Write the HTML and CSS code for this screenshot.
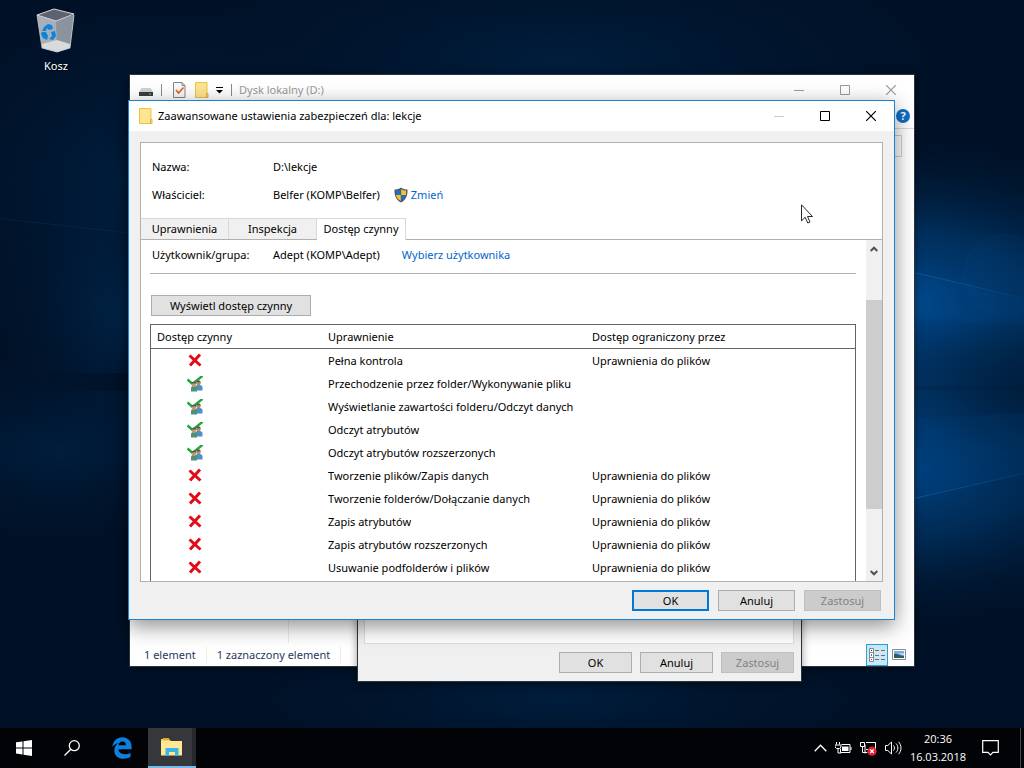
FILE: index.html
```
<!DOCTYPE html>
<html lang="pl">
	<head>
		<meta charset="UTF-8">
		<meta name="viewport" content="width=device-width, initial-scale=1.0">
		<title>Zaawansowane ustawienia zabezpieczeń dla: lekcje</title>
		<link rel="stylesheet" href="styles.css">
	</head>
	<body>
		<!-- shared icons -->
		<svg class="sprite" aria-hidden="true">
			<symbol id="folder" viewBox="0 0 14 16">
				<path d="M.5.5h11.500v15H.5z" fill="#ffe48f" stroke="#e9c34d"/>
				<path d="M11.500 11.500h1.500v4h-1.500z" fill="#ffe48f" stroke="#dfb52f"/>
			</symbol>
			<symbol id="deny" viewBox="0 0 16 16">
				<path d="M2.500 2.500l11 10M13 1.500L3 12.500" stroke="#e30b17" stroke-width="3" fill="none"/>
			</symbol>
			<symbol id="allow" viewBox="0 0 16 16">
				<path d="M.5 3.500L5.500 8 15.500-.2" stroke="#22a63c" stroke-width="2.400" fill="none"/>
				<path d="M8.500 14.500v-3c0-2 1.200-2.500 3.200-2.500s3.800.5 3.800 2.500v3z" fill="#4a91c8"/>
				<circle cx="11.500" cy="7.300" r="2.100" fill="#b08d66"/>
				<path d="M9.200 6.500c0-2.600 4.500-2.600 4.600 0-1.300-.8-3.100-.8-4.600 0z" fill="#5a5044"/>
				<path d="M4 15.500v-3c0-2 1.200-2.500 3-2.500s3 .5 3 2.500v3z" fill="#4d9276"/>
				<circle cx="6.900" cy="8.700" r="2.200" fill="#bd9d76"/>
				<path d="M4.600 7.800c0-2.600 4.500-2.600 4.600 0-1.300-.8-3.100-.8-4.600 0z" fill="#5a5044"/>
			</symbol>
			<symbol id="minimize" viewBox="0 0 10 10"><path d="M0 5.500h10" stroke="currentColor"/></symbol>
			<symbol id="maximize" viewBox="0 0 10 10"><path d="M.5.5h9v9h-9z" stroke="currentColor" fill="none"/></symbol>
			<symbol id="close" viewBox="0 0 10 10"><path d="M0 0l10 10M10 0L0 10" stroke="currentColor" stroke-width="1.200"/></symbol>
		</svg>

		<main class="desktop">
			<svg class="wallpaper" viewBox="0 0 1024 768" preserveAspectRatio="none" aria-hidden="true">
				<defs>
					<radialGradient id="glowRight">
						<stop offset="0" stop-color="#0060b8"/>
						<stop offset=".45" stop-color="#004482" stop-opacity=".75"/>
						<stop offset="1" stop-color="#001a38" stop-opacity="0"/>
					</radialGradient>
					<radialGradient id="glowLeft">
						<stop offset="0" stop-color="#00396d" stop-opacity=".9"/>
						<stop offset="1" stop-color="#001a38" stop-opacity="0"/>
					</radialGradient>
					<radialGradient id="shade">
						<stop offset="0" stop-color="#001a35" stop-opacity=".6"/>
						<stop offset="1" stop-color="#001a35" stop-opacity="0"/>
					</radialGradient>
					<linearGradient id="band">
						<stop offset="0" stop-color="#000a1c" stop-opacity="0"/>
						<stop offset="1" stop-color="#000a1c" stop-opacity=".5"/>
					</linearGradient>
					<linearGradient id="beam">
						<stop offset="0" stop-color="#1674c8" stop-opacity=".5"/>
						<stop offset="1" stop-color="#1674c8" stop-opacity=".15"/>
					</linearGradient>
				</defs>
				<rect width="1024" height="768" fill="#001127"/>
				<ellipse cx="140" cy="180" rx="230" ry="190" fill="url(#glowLeft)" opacity=".4"/>
				<ellipse cx="140" cy="315" rx="150" ry="150" fill="url(#glowLeft)" opacity=".6"/>
				<ellipse cx="60" cy="450" rx="240" ry="100" fill="url(#glowLeft)" opacity=".35"/>
				<ellipse cx="560" cy="60" rx="420" ry="130" fill="url(#glowLeft)" opacity=".35"/>
				<ellipse cx="890" cy="305" rx="330" ry="170" fill="url(#glowRight)" opacity=".75"/>
				<ellipse cx="890" cy="470" rx="310" ry="160" fill="url(#glowRight)" opacity=".65"/>
				<ellipse cx="560" cy="700" rx="330" ry="70" fill="url(#glowLeft)" opacity=".35"/>
				<ellipse cx="1024" cy="385" rx="120" ry="70" fill="url(#shade)"/>
				<path d="M0 218l135 15v1L0 219z" fill="#17578f" opacity=".2"/>
				<path d="M20 373h109v18H20z" fill="url(#band)"/>
				<path d="M914 386h110v4H914z" fill="#001a35" opacity=".2"/>
				<path d="M914 272l110 26v1l-110-26zM914 498l110-25v1l-110 25z" fill="url(#beam)"/>
				<path d="M914 274l110 26v25l-110-5zM914 499l110-26v-60l-110 5z" fill="#0062b4" opacity=".07"/>
				<circle cx="1004" cy="275" r="42" fill="#0a5ea6" opacity=".06"/>
			</svg>

			<a class="shortcut" href="#kosz">
				<svg width="40" height="46" viewBox="0 0 40 46" aria-hidden="true">
					<path d="M1 7l19 6 18-6-4 33-13 4-15-4z" fill="#a9afb8"/>
					<path d="M20 13l18-6-4 33-13 4z" fill="#8b939f"/>
					<path d="M6 36l15-4 13 4v4l-13 4-15-4z" fill="#d9dadc"/>
					<path d="M1 7l17-6 20 5-18 7z" fill="#5d636e" stroke="#d5d8dc"/>
					<path d="M1 7l5 33 15 4 13-4 4-33" fill="none" stroke="#c5c9cf" stroke-width=".8"/>
					<path d="M8 19l4-3 4 1 1 4-4 1-2-2-1 3-4 0zM15 24l4-1 1 5-3 4-4-1 3-3zM6 24l4 0 2 4-1 4-4-2-2-4z" fill="#0b84dc"/>
				</svg>
				<span>Kosz</span>
			</a>

			<section class="window explorer" aria-label="Dysk lokalny (D:)">
				<header class="quickbar">
					<svg class="drive" width="14" height="8" viewBox="0 0 14 8" aria-hidden="true">
						<path d="M2.500 0h9L14 4H0z" fill="#d0d2d4"/>
						<path d="M0 4h14v4H0z" fill="#3a3d40"/>
						<path d="M10 5.500h2v1h-2z" fill="#3be05a"/>
					</svg>
					<i class="sep"></i>
					<svg class="doc" width="13" height="16" viewBox="0 0 13 16" aria-hidden="true">
						<path d="M.5.5h8.500l3 3v12H.5z" fill="#f8f8f8" stroke="#858585"/>
						<path d="M9 .5v3h3" fill="none" stroke="#858585"/>
						<path d="M3 8l2.500 3L10.500 5.500" fill="none" stroke="#ea5b22" stroke-width="1.600"/>
					</svg>
					<svg class="folder" width="14" height="16"><use href="#folder"/></svg>
					<svg class="more" width="7" height="7" viewBox="0 0 7 7" aria-hidden="true"><path d="M0 .5h7" stroke="#000"/><path d="M0 3h7L3.500 6.500z"/></svg>
					<i class="sep"></i>
					<span class="caption">Dysk lokalny (D:)</span>
					<div class="controls">
						<button aria-label="Minimalizuj"><svg width="10" height="10"><use href="#minimize"/></svg></button>
						<button aria-label="Maksymalizuj"><svg width="10" height="10"><use href="#maximize"/></svg></button>
						<button aria-label="Zamknij"><svg width="10" height="10"><use href="#close"/></svg></button>
					</div>
				</header>
				<div class="ribbon">
					<button class="help" aria-label="Pomoc">?</button>
				</div>
				<div class="address"><input type="text" aria-label="Przeszukaj"></div>
				<div class="files"><nav></nav></div>
				<footer class="status">
					<span>1 element</span>
					<span>1 zaznaczony element</span>
					<div class="views">
						<button class="on" aria-label="Szczegóły">
							<svg width="18" height="16" viewBox="0 0 18 16" aria-hidden="true">
								<path d="M1.500 1.500h4v13h-4zM1.500 5.500h4M1.500 10.500h4" fill="#fff" stroke="#8a8a8a"/>
								<path d="M7 3.500h4M13 3.500h4M7 8.500h4M13 8.500h4M7 12.500h4M13 12.500h4" stroke="#6e6e6e"/>
								<path d="M3 3h1v1H3z" fill="#333"/><path d="M3 7h1v2H3z" fill="#2b7de0"/><path d="M3 12h1v1H3z" fill="#d22"/>
							</svg>
						</button>
						<button aria-label="Duże ikony">
							<svg width="14" height="11" viewBox="0 0 14 11" aria-hidden="true">
								<path d="M.5.5h13v10H.5z" fill="#fff" stroke="#8a8a8a"/>
								<path d="M2 2h10v7H2z" fill="#77aee8"/>
								<path d="M2 5c3-1 5 2 10 2v2H2z" fill="#2e5f5c"/>
								<path d="M6 4.500h6v1.500z" fill="#e6f2fb"/>
							</svg>
						</button>
					</div>
				</footer>
			</section>

			<section class="window properties" aria-label="Właściwości">
				<div class="page"></div>
				<div class="buttons">
					<button>OK</button>
					<button>Anuluj</button>
					<button disabled>Zastosuj</button>
				</div>
			</section>

			<section class="window security" role="dialog" aria-labelledby="title">
				<header class="titlebar">
					<svg width="14" height="16" aria-hidden="true"><use href="#folder"/></svg>
					<h1 id="title">Zaawansowane ustawienia zabezpieczeń dla: lekcje</h1>
					<div class="controls">
						<button disabled aria-label="Minimalizuj"><svg width="10" height="10"><use href="#minimize"/></svg></button>
						<button aria-label="Maksymalizuj"><svg width="10" height="10"><use href="#maximize"/></svg></button>
						<button aria-label="Zamknij"><svg width="10" height="10"><use href="#close"/></svg></button>
					</div>
				</header>
				<div class="panel">
					<div class="info">
						<span class="name">Nazwa:</span>
						<span>D:\lekcje</span>
					</div>
					<div class="info">
						<span class="name">Właściciel:</span>
						<span>Belfer (KOMP\Belfer)</span>
						<svg class="shield" width="14" height="16" viewBox="0 0 14 16" aria-hidden="true">
							<path d="M7 .5c2 1.500 4 2 6.500 2 .3 6-1.500 10.500-6.500 13C2 13 .2 8.500.5 2.500 3 2.500 5 2 7 .5z" fill="#555"/>
							<path d="M6.800 2C5.500 3 3.800 3.500 2 3.600V8h4.800z" fill="#1a6ed0"/>
							<path d="M7.200 2c1.300 1 3 1.500 4.900 1.600V8H7.200z" fill="#fdbf2d"/>
							<path d="M2 8h4.800v6C4 12.600 2.500 10.500 2 8z" fill="#fdbf2d"/>
							<path d="M12 8H7.200v6c2.800-1.400 4.300-3.500 4.800-6z" fill="#1a6ed0"/>
						</svg>
						<a href="#zmien">Zmień</a>
					</div>
					<div class="tabs" role="tablist">
						<button role="tab">Uprawnienia</button>
						<button role="tab">Inspekcja</button>
						<button role="tab" class="active" aria-selected="true">Dostęp czynny</button>
					</div>
					<div class="scroller">
						<div class="content">
							<div class="info user">
								<span class="name">Użytkownik/grupa:</span>
								<span>Adept (KOMP\Adept)</span>
								<a href="#wybierz">Wybierz użytkownika</a>
							</div>
							<button class="show">Wyświetl dostęp czynny</button>
							<table>
								<thead>
									<tr><th class="access">Dostęp czynny</th><th class="right">Uprawnienie</th><th>Dostęp ograniczony przez</th></tr>
								</thead>
								<tbody>
									<tr><td class="mark"><svg width="16" height="16"><use href="#deny"/></svg></td><td>Pełna kontrola</td><td>Uprawnienia do plików</td></tr>
									<tr><td class="mark"><svg width="16" height="16"><use href="#allow"/></svg></td><td>Przechodzenie przez folder/Wykonywanie pliku</td><td></td></tr>
									<tr><td class="mark"><svg width="16" height="16"><use href="#allow"/></svg></td><td>Wyświetlanie zawartości folderu/Odczyt danych</td><td></td></tr>
									<tr><td class="mark"><svg width="16" height="16"><use href="#allow"/></svg></td><td>Odczyt atrybutów</td><td></td></tr>
									<tr><td class="mark"><svg width="16" height="16"><use href="#allow"/></svg></td><td>Odczyt atrybutów rozszerzonych</td><td></td></tr>
									<tr><td class="mark"><svg width="16" height="16"><use href="#deny"/></svg></td><td>Tworzenie plików/Zapis danych</td><td>Uprawnienia do plików</td></tr>
									<tr><td class="mark"><svg width="16" height="16"><use href="#deny"/></svg></td><td>Tworzenie folderów/Dołączanie danych</td><td>Uprawnienia do plików</td></tr>
									<tr><td class="mark"><svg width="16" height="16"><use href="#deny"/></svg></td><td>Zapis atrybutów</td><td>Uprawnienia do plików</td></tr>
									<tr><td class="mark"><svg width="16" height="16"><use href="#deny"/></svg></td><td>Zapis atrybutów rozszerzonych</td><td>Uprawnienia do plików</td></tr>
									<tr><td class="mark"><svg width="16" height="16"><use href="#deny"/></svg></td><td>Usuwanie podfolderów i plików</td><td>Uprawnienia do plików</td></tr>
									<tr><td></td><td></td><td></td></tr>
								</tbody>
							</table>
						</div>
						<div class="scrollbar">
							<button aria-label="W górę"><svg width="8" height="6" viewBox="0 0 8 6"><path d="M.7 5L4 1.700 7.300 5" stroke="#505050" stroke-width="2" fill="none"/></svg></button>
							<div class="track"><div class="thumb"></div></div>
							<button aria-label="W dół"><svg width="8" height="6" viewBox="0 0 8 6"><path d="M.7 1L4 4.300 7.300 1" stroke="#505050" stroke-width="2" fill="none"/></svg></button>
						</div>
					</div>
				</div>
				<div class="buttons">
					<button class="default">OK</button>
					<button>Anuluj</button>
					<button disabled>Zastosuj</button>
				</div>
			</section>

			<svg class="cursor" width="12" height="20" viewBox="0 0 12 20" aria-hidden="true">
				<path d="M.5.800v16l3.700-3.500 2.600 5.700 2.200-1-2.500-5.500h5z" fill="#fff" stroke="#111" stroke-width=".9"/>
			</svg>
		</main>

		<footer class="taskbar">
			<button class="task" aria-label="Start">
				<svg width="16" height="16" viewBox="0 0 16 16"><path d="M0 2.300L6.500 1.400v6H0zM7.500 1.200L16 0v7.400H7.500zM0 8.500h6.500v6L0 13.600zM7.500 8.500H16V16l-8.500-1.200z" fill="#fff"/></svg>
			</button>
			<button class="task" aria-label="Szukaj">
				<svg width="16" height="16" viewBox="0 0 16 16"><circle cx="10.300" cy="5.700" r="5" fill="none" stroke="#fff" stroke-width="1.300"/><path d="M6.800 9.300L.5 15.500" stroke="#fff" stroke-width="1.300"/></svg>
			</button>
			<button class="task edge" aria-label="Microsoft Edge">
				<svg width="20" height="22" viewBox="0 0 20 22"><path d="M.3 9.800C1 4.200 4.800.3 10.200.3c6 0 9.400 4.200 9.400 9.800v2.200H6.500c.1 3.300 3 4.900 6.300 4.900 2.200 0 4-.5 5.700-1.500v4.400c-2 1.100-4.400 1.600-7 1.600-5.600 0-9.200-3.300-9.200-8.300 0-3.300 1.700-6 4.600-7.400C3.900 6.700 1.800 7.800.3 9.800zm6.300-1.500h7.300c0-2.200-1-3.700-3.400-3.700-2.200 0-3.600 1.400-3.900 3.700z" fill="#0d7fdc"/></svg>
			</button>
			<button class="task running" aria-label="Eksplorator plików">
				<svg width="22" height="18" viewBox="0 0 22 18">
					<path d="M0 1h8l2 2h11v14H0z" fill="#f6cf62"/>
					<path d="M2 0h6v2H2z" fill="#e9a62c"/>
					<path d="M0 3h21v14.500H0z" fill="#ffe793"/>
					<path d="M4.500 18v-8h13v8h-3.500v-4H8v4z" fill="#3db3e6"/>
				</svg>
			</button>
			<div class="tray">
				<svg width="13" height="8" viewBox="0 0 13 8"><path d="M.7 7.300l5.800-6 5.800 6" fill="none" stroke="#fff" stroke-width="1.300"/></svg>
				<svg width="17" height="12" viewBox="0 0 17 12"><path d="M1.500 0v2.500M4.500 0v2.500M0 3h6v2L4.500 6.500h-3L0 5zM3 6v5h3" fill="none" stroke="#fff"/><path d="M6.500 2.500h8.500v8H5.500v-4M16 5v3" fill="none" stroke="#fff"/><path d="M7 4.500h6.500v4.500H7z" fill="#fff"/></svg>
				<svg width="17" height="15" viewBox="0 0 17 15"><path d="M.5 1.500h4v4h-4zM6 1.500h9.500v7H6M2.500 6v5.500h5M5 3.500v9" fill="none" stroke="#fff"/><circle cx="12" cy="10.200" r="4.600" fill="#e0202c"/><path d="M10.200 8.400l3.600 3.600M13.800 8.400L10.200 12" stroke="#fff" stroke-width="1.300"/></svg>
				<svg width="17" height="14" viewBox="0 0 17 14"><path d="M.5 4.500h2.300L6.500 1v12L2.800 9.500H.5zM8.500 4.500c1.300 1.500 1.300 3.500 0 5M11 2.500c2.500 2.500 2.500 6.500 0 9M13.500.800c3.300 3.500 3.300 9 0 12.400" fill="none" stroke="#fff"/></svg>
				<time datetime="2018-03-16T20:36"><span>20:36</span><span>16.03.2018</span></time>
				<svg class="notes" width="17" height="16" viewBox="0 0 17 16"><path d="M.7.700h15.600v11.600H11l-2.500 2.500L6 12.300H.7z" fill="none" stroke="#fff" stroke-width="1.200"/></svg>
			</div>
		</footer>
	</body>
</html>
```
FILE: styles.css
```
* {
	box-sizing: border-box;
}
body {
	font-family: "Noto Sans", "Open Sans", sans-serif;
	font-size: 11px;
	line-height: 16px;
	color: #000;
	margin: 0;
	height: 100vh;
	display: flex;
	flex-direction: column;
	background: #001127;
	overflow: hidden;
}
button {
	font: inherit;
	color: inherit;
	padding: 0;
	border: 0;
	background: none;
}
svg {
	display: block;
	flex: none;
}
a {
	color: #0066cc;
	text-decoration: none;
}
.sprite {
	position: absolute;
	width: 0;
	height: 0;
}

/* desktop */
.desktop {
	position: relative;
	flex: 1;
}
.wallpaper {
	position: absolute;
	left: 0;
	top: 0;
	width: 100vw;
	height: 100vh;
}
.shortcut {
	position: absolute;
	left: 18px;
	top: 8px;
	width: 76px;
	display: flex;
	flex-direction: column;
	align-items: center;
	gap: 4px;
	color: #fff;
	text-shadow: 0 1px 2px #000;
}
.cursor {
	position: absolute;
	left: 801px;
	top: 204px;
}

/* windows */
.window {
	position: absolute;
	display: flex;
	flex-direction: column;
	border: 1px solid #2b3540;
	box-shadow: 0 2px 8px rgba(0, 0, 0, 0.4);
}
.controls {
	display: flex;
	margin-left: auto;
}
.controls button {
	width: 46px;
	height: 28px;
	display: flex;
	align-items: center;
	justify-content: center;
}
.buttons {
	display: flex;
	justify-content: flex-end;
	gap: 9px;
}
.buttons button,
.show {
	height: 21px;
	line-height: 19px;
	background: #e1e1e1;
	border: 1px solid #adadad;
}
.buttons button {
	width: 77px;
}
.buttons .default {
	border: 2px solid #0078d7;
	line-height: 17px;
}
.buttons button:disabled {
	color: #838383;
	background: #ccc;
	border-color: #bfbfbf;
}

/* explorer */
.explorer {
	left: 129px;
	right: 109px;
	top: 74px;
	bottom: 61px;
	background: #fff;
}
.quickbar {
	display: flex;
	align-items: center;
	height: 30px;
	padding-left: 9px;
	color: #999;
}
.quickbar .drive {
	margin-top: 4px;
}
.quickbar .sep {
	width: 1px;
	height: 12px;
	margin: 0 9px 0 8px;
	background: #8a8a8a;
}
.quickbar .doc {
	margin-left: 2px;
}
.quickbar .folder {
	margin: 0 7px 0 9px;
}
.quickbar .caption {
	margin-left: -2px;
}
.ribbon {
	display: flex;
	justify-content: flex-end;
	height: 24px;
	padding: 4px 4px 0 0;
	border-bottom: 1px solid #d9d9d9;
}
.help {
	width: 14px;
	height: 14px;
	line-height: 14px;
	border-radius: 50%;
	background: #0f6fc6;
	color: #fff;
	font-weight: bold;
}
.address {
	padding: 6px 12px;
}
.address input {
	display: block;
	width: 100%;
	height: 22px;
	border: 1px solid #d0d0d0;
}
.files {
	flex: 1;
}
.files nav {
	width: 159px;
	height: 100%;
	border-right: 1px solid #ececec;
}
.status {
	display: flex;
	align-items: center;
	height: 23px;
	padding-left: 4px;
	color: #1e395b;
}
.status > span {
	padding: 0 10px;
	border-right: 1px solid #ececec;
}
.views {
	display: flex;
	margin-left: auto;
	padding-right: 4px;
}
.views button {
	width: 22px;
	height: 22px;
	display: flex;
	align-items: center;
	justify-content: center;
}
.views .on {
	background: #cce8f6;
	border: 1px solid #26a0da;
}

/* properties dialog under the main one */
.properties {
	left: 357px;
	right: 222px;
	top: 120px;
	bottom: 46px;
	padding: 0 7px 8px 6px;
	gap: 8px;
	background: #f0f0f0;
}
.properties .page {
	flex: 1;
	background: #fff;
	border: 1px solid #dcdcdc;
}
.properties .buttons {
	gap: 8px;
}
.properties .buttons button {
	width: 73px;
}

/* advanced security dialog */
.security {
	left: 128px;
	right: 129px;
	top: 100px;
	bottom: 108px;
	background: #f0f0f0;
	border-color: #1883d7;
	box-shadow: 0 6px 20px rgba(0, 0, 0, 0.45);
}
.titlebar {
	display: flex;
	align-items: center;
	height: 30px;
	padding-left: 10px;
	background: #fff;
}
.titlebar h1 {
	margin: 0 0 0 5px;
	font-size: 11px;
	font-weight: normal;
}
.titlebar button:disabled {
	color: #ccc;
}
.panel {
	flex: 1;
	min-height: 0;
	display: flex;
	flex-direction: column;
	margin: 11px 11px 8px;
	padding-top: 10px;
	background: #fff;
	border: 1px solid #b0b0b0;
}
.info {
	display: flex;
	align-items: center;
	height: 28px;
	padding-left: 11px;
}
.info .name {
	width: 121px;
}
.info .shield {
	margin: 0 3px 0 14px;
}
.tabs {
	display: flex;
	align-items: flex-end;
	height: 31px;
	margin-bottom: -1px;
	border-bottom: 1px solid #b0b0b0;
}
.tabs button {
	width: 88px;
	height: 21px;
	background: #f0f0f0;
	border: 1px solid #d9d9d9;
	border-width: 1px 1px 0 0;
}
.tabs .active {
	width: 89px;
	height: 22px;
	padding-bottom: 2px;
	margin-bottom: -1px;
	background: #fff;
}
.scroller {
	flex: 1;
	min-height: 0;
	display: flex;
	padding-top: 1px;
}
.content {
	flex: 1;
	overflow: hidden;
	padding: 0 10px 0 9px;
}
.user {
	height: 34px;
	padding: 0 0 4px 2px;
	margin-bottom: 21px;
	border-bottom: 1px solid #b0b0b0;
}
.user a {
	margin-left: 22px;
}
.show {
	display: block;
	width: 160px;
	margin: 0 0 8px 1px;
}
table {
	width: 100%;
	table-layout: fixed;
	border: 1px solid #646464;
	border-spacing: 0;
}
th {
	height: 24px;
	padding: 0;
	font-weight: normal;
	text-align: left;
	border-bottom: 1px solid #646464;
}
th.access {
	width: 177px;
	padding-left: 6px;
}
th.right {
	width: 264px;
}
td {
	height: 23px;
	padding: 0;
	white-space: nowrap;
}
td.mark {
	padding-left: 36px;
}
.scrollbar {
	width: 16px;
	display: flex;
	flex-direction: column;
	background: #f0f0f0;
}
.scrollbar button {
	height: 17px;
	display: flex;
	align-items: center;
	justify-content: center;
}
.track {
	flex: 1;
	padding-top: 43px;
}
.thumb {
	height: 79%;
	background: #cdcdcd;
}
.security > .buttons {
	padding: 0 13px 8px;
}

/* taskbar */
.taskbar {
	position: relative;
	display: flex;
	height: 40px;
	background: #020307;
	color: #fff;
}
.task {
	width: 48px;
	display: flex;
	align-items: center;
	justify-content: center;
}
.task.edge {
	width: 52px;
}
.task.running {
	background: #35373b;
	border-bottom: 2px solid #76b9ed;
	box-shadow: inset -4px 0 #26282b;
}
.tray {
	display: flex;
	align-items: center;
	gap: 8px;
	margin-left: auto;
	margin-right: 3px;
	padding-right: 21px;
	border-right: 1px solid #4a4a4a;
}
.tray time {
	display: flex;
	flex-direction: column;
	align-items: center;
	font-family: "Open Sans", sans-serif;
	line-height: 18px;
	padding: 0 8px 0 0;
}
```
